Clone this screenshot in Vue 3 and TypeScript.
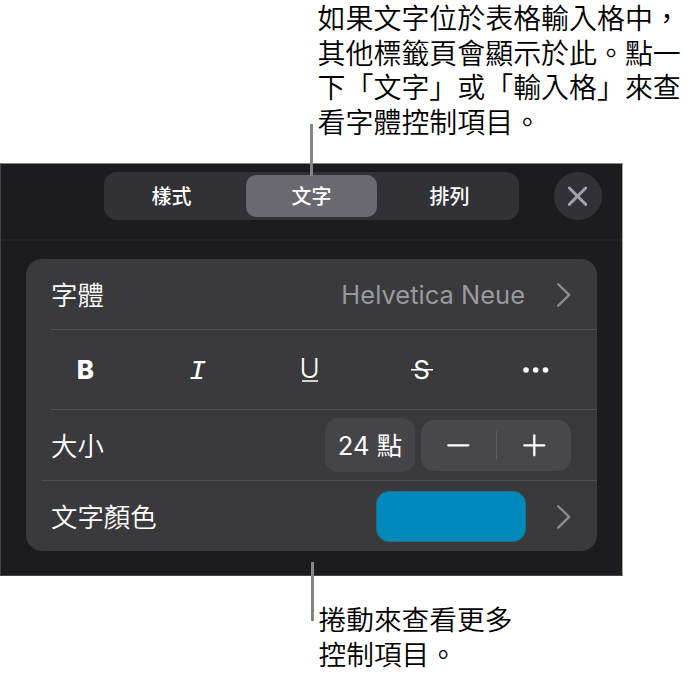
<script setup lang="ts">
import { ref } from 'vue'

const tabs: string[] = ['樣式', '文字', '排列']
const active = ref(1)
const size = ref(24)
const topNote: string[] = [
  '如果文字位於表格輸入格中，',
  '其他標籤頁會顯示於此。點一',
  '下「文字」或「輸入格」來查',
  '看字體控制項目。',
]
const bottomNote: string[] = ['捲動來查看更多', '控制項目。']
</script>

<template>
  <main class="page">
    <p class="note note-top"><span v-for="line in topNote" :key="line">{{ line }}</span></p>

    <section class="panel">
      <header class="bar">
        <div class="segments">
          <button
            v-for="(tab, i) in tabs"
            :key="tab"
            class="segment"
            :class="{ active: i === active }"
            @click="active = i"
          >{{ tab }}</button>
        </div>
        <button class="close">
          <svg width="48" height="48" viewBox="0 0 48 48"><path d="M15.3 16 31.7 32.4M31.7 16 15.3 32.4" /></svg>
        </button>
      </header>

      <div class="card">
        <div class="row font-row">
          <span class="label">字體</span>
          <span class="value">Helvetica Neue</span>
          <svg class="chevron" width="14" height="26" viewBox="0 0 14 26"><path d="M1.2 3.2 12.2 13.9 1.2 24.6" /></svg>
        </div>
        <div class="row styles">
          <span class="style bold">B</span>
          <span class="style italic">I</span>
          <span class="style underline">U</span>
          <span class="style strike">S</span>
          <span class="style">
            <svg width="28" height="8" viewBox="0 0 28 8"><circle cx="4" cy="4" r="2.8" /><circle cx="13.7" cy="4" r="2.8" /><circle cx="23.5" cy="4" r="2.8" /></svg>
          </span>
        </div>
        <div class="row size-row">
          <span class="label">大小</span>
          <span class="size">{{ size }} 點</span>
          <div class="stepper">
            <button class="step" @click="size--"><svg width="24" height="24" viewBox="0 0 24 24"><path d="M2.3 12.3H22.3" /></svg></button>
            <i class="split"></i>
            <button class="step" @click="size++"><svg width="24" height="24" viewBox="0 0 24 24"><path d="M2.3 12.3H22.3M12.3 2.3V22.3" /></svg></button>
          </div>
        </div>
        <div class="row color-row">
          <span class="label">文字顏色</span>
          <span class="swatch"></span>
          <svg class="chevron" width="14" height="26" viewBox="0 0 14 26"><path d="M1.2 3.2 12.2 13.9 1.2 24.6" /></svg>
        </div>
      </div>
      <i class="leader leader-top"></i>
      <i class="leader leader-bottom"></i>
    </section>

    <p class="note note-bottom"><span v-for="line in bottomNote" :key="line">{{ line }}</span></p>
  </main>
</template>

<style>
body {
  background: #fff;
}
</style>

<style scoped>
.page {
  box-sizing: border-box;
  width: 697px;
  height: 678px;
  overflow: hidden;
  display: flex;
  flex-direction: column;
  font-family: Inter, "Noto Sans CJK TC", sans-serif;
}
.note {
  margin: 0;
  font: 350 27.95px/34.5px "Noto Sans CJK TC", sans-serif;
  color: #000;
  white-space: nowrap;
}
.note span {
  display: block;
}
.note-top {
  box-sizing: border-box;
  height: 163px;
  padding-left: 317.6px;
}
.note-bottom {
  padding: 25px 0 0 318.5px;
  font-size: 27.7px;
}
button {
  margin: 0;
  padding: 0;
  border: 0;
  background: none;
  color: inherit;
  font: inherit;
}
svg {
  display: block;
  fill: none;
  stroke-linecap: round;
  stroke-linejoin: round;
}
.panel {
  position: relative;
  box-sizing: border-box;
  width: 623px;
  height: 413px;
  border: 1px solid #454547;
  border-top-color: #858586;
  border-right-color: #a6a6a7;
  background: #1c1c1e;
  color: #fff;
}
.bar {
  box-sizing: border-box;
  height: 77px;
  padding: 8px 20px 0 103px;
  display: flex;
  justify-content: space-between;
  align-items: flex-start;
  border-bottom: 2px solid #232325;
}
.segments {
  box-sizing: border-box;
  width: 415px;
  height: 48px;
  padding: 3px 4px 3px 2px;
  display: grid;
  grid-template-columns: 131px 131px 131px;
  justify-content: space-between;
  border-radius: 13px;
  background: #323236;
}
.segment {
  height: 42px;
  border-radius: 10px;
  font: 500 20px/40px "Noto Sans CJK TC", sans-serif;
}
.segment.active {
  width: 131px;
  margin-left: 1px;
  background: #69696f;
}
.close {
  width: 48px;
  height: 48px;
  border-radius: 50%;
  background: #323236;
}
.close path {
  stroke: #a1a1a8;
  stroke-width: 3;
}
.card {
  width: 571px;
  height: 292px;
  margin: 18px 0 0 25px;
  border-radius: 16px;
  background: #3a3a3c;
  display: grid;
  grid-template-rows: 71px 80px 71px 70px;
}
.row {
  box-sizing: border-box;
  margin-left: 25px;
  padding-right: 26px;
  display: flex;
  align-items: center;
  border-bottom: 1px solid #505053;
}
.label {
  margin-right: auto;
  font: 350 26.4px/38px "Noto Sans CJK TC", sans-serif;
}
.value {
  margin-right: 32px;
  font-size: 25.5px;
  color: #98989f;
}
.chevron path {
  stroke: #8c8c91;
  stroke-width: 2.3;
}
.styles {
  padding: 0;
  display: grid;
  grid-template-columns: 69px 155px 69px 155px 73px;
}
.style {
  display: flex;
  justify-content: center;
  font-size: 26px;
  line-height: 32px;
}
.style circle {
  fill: #fff;
}
.bold {
  font-weight: 800;
}
.italic {
  padding-top: 4px;
  font-family: "Liberation Mono", monospace;
  font-size: 28.5px;
  font-style: italic;
}
.underline {
  box-sizing: border-box;
  width: 16px;
  height: 24px;
  margin: 0 auto;
  font-size: 27.5px;
  line-height: 20px;
  font-weight: 350;
  border-bottom: 2px solid #d0d0d1;
}
.strike {
  width: 22px;
  margin: 0 auto;
  font-size: 26px;
  background: linear-gradient(#fff, #fff) center 15px / 22px 1.5px no-repeat;
}
.size-row {
  margin-left: 16px;
  padding-left: 9px;
}
.size {
  width: 90px;
  height: 54px;
  margin-right: 6px;
  border-radius: 13px;
  background: #454549;
  text-align: center;
  font: 400 25.5px/56px Inter, "Noto Sans CJK TC", sans-serif;
}
.stepper {
  width: 150px;
  height: 51px;
  border-radius: 13px;
  background: #48484c;
  display: flex;
  align-items: center;
}
.step {
  flex: 1;
  display: flex;
  justify-content: center;
}
.step path {
  stroke: #fff;
  stroke-width: 2.3;
}
.split {
  width: 1px;
  height: 28px;
  background: #5d5d62;
}
.color-row {
  border-bottom: 0;
}
.swatch {
  box-sizing: border-box;
  width: 150px;
  height: 51px;
  margin-right: 31px;
  border: 1px solid #246f8c;
  border-radius: 13px;
  background: #008abc;
}
.leader {
  position: absolute;
  width: 3px;
  background: #858585;
}
.leader-top {
  left: 309px;
  top: -40px;
  height: 52px;
}
.leader-bottom {
  left: 310px;
  top: 398px;
  height: 59px;
}
</style>
